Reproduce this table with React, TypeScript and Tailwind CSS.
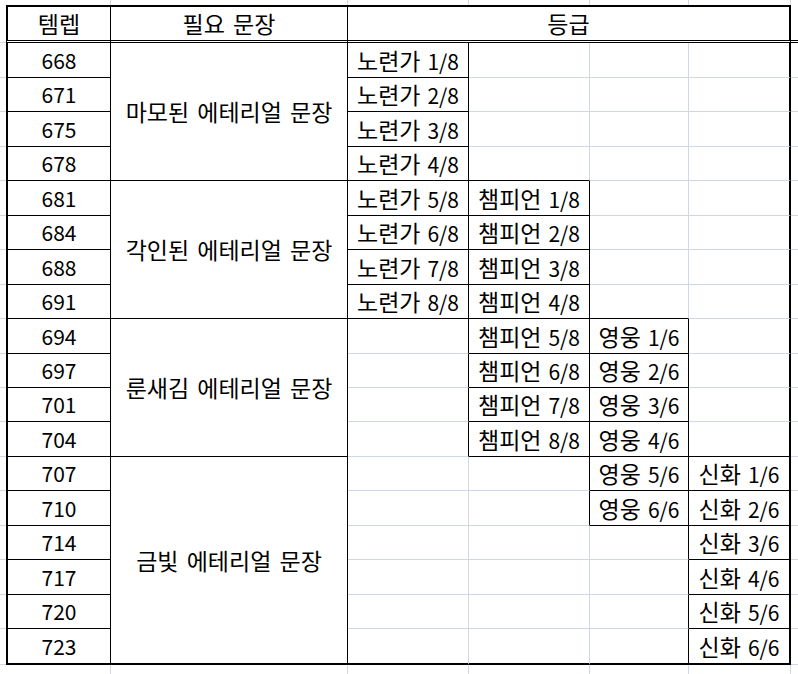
const TEMPLS = [668, 671, 675, 678, 681, 684, 688, 691, 694, 697, 701, 704, 707, 710, 714, 717, 720, 723]

const GROUPS = [
  { name: '마모된 에테리얼 문장', start: 0, span: 4 },
  { name: '각인된 에테리얼 문장', start: 4, span: 4 },
  { name: '룬새김 에테리얼 문장', start: 8, span: 4 },
  { name: '금빛 에테리얼 문장', start: 12, span: 6 },
]

// grade columns: 2..5 (C..F)
const GRADES = [
  { col: 2, first: 0, label: '노련가', total: 8 },
  { col: 3, first: 4, label: '챔피언', total: 8 },
  { col: 4, first: 8, label: '영웅', total: 6 },
  { col: 5, first: 12, label: '신화', total: 6 },
]

const LAST = TEMPLS.length - 1

const SPAN: Record<number, string> = { 4: 'row-span-4', 6: 'row-span-6' }

const RIGHT = {
  grid: 'border-r border-r-[#d0d7e5]',
  black: 'border-r border-r-black',
  thick: 'border-r-2 border-r-black',
}

const BOTTOM = {
  grid: 'border-b border-b-[#d0d7e5]',
  black: 'border-b border-b-black',
  thick: 'border-b-2 border-b-black',
}

function gradeOf(r: number, c: number) {
  const g = GRADES.find((x) => x.col === c)
  if (!g) return null
  const k = r - g.first
  if (k < 0 || k >= g.total) return null
  return { label: g.label, frac: `${k + 1}/${g.total}` }
}

function bordered(r: number, c: number) {
  if (r < 0 || r > LAST) return false
  if (c === 0 || c === 1) return true
  return gradeOf(r, c) !== null
}

const cell = 'flex items-center justify-center whitespace-nowrap'

// hangul is set a touch larger than digits, like Malgun Gothic in the sheet
function Ko({ children }: { children: string }) {
  return <span className="text-[23px] [word-spacing:3px]">{children}</span>
}

function MarginRow({ keyPrefix }: { keyPrefix: string }) {
  return (
    <>
      <div key={`${keyPrefix}-l`} />
      {[0, 1, 2, 3, 4, 5].map((c) => (
        <div key={`${keyPrefix}-${c}`} className={RIGHT.grid} />
      ))}
      <div key={`${keyPrefix}-r`} />
    </>
  )
}

export default function App() {
  return (
    <div className="h-[674px] w-[798px] overflow-hidden bg-white font-['Noto_Sans_CJK_KR','Noto_Sans',sans-serif] text-[21px] leading-none text-black">
      <div className="grid h-full grid-cols-[6px_105px_237px_121px_121px_99px_102px_7px] grid-rows-[5px_38px_35px_34px_35px_34px_35px_34px_35px_34px_35px_34px_34px_35px_34px_35px_34px_35px_34px_36px_9px]">
        <MarginRow keyPrefix="top" />

        {/* header */}
        <div className={BOTTOM.grid} />
        <div className={`${cell} border-double border-t-2 border-l-2 border-b-3 border-t-black border-l-black border-b-black ${RIGHT.black}`}>
          <Ko>템렙</Ko>
        </div>
        <div className={`${cell} border-double border-t-2 border-b-3 border-t-black border-b-black ${RIGHT.black}`}>
          <Ko>필요 문장</Ko>
        </div>
        <div className={`${cell} col-span-4 border-double border-t-2 border-b-3 border-t-black border-b-black ${RIGHT.thick}`}>
          <Ko>등급</Ko>
        </div>
        <div className="border-double border-b-3 border-b-black" />

        {TEMPLS.map((t, r) => {
          const group = GROUPS.find((g) => g.start === r)
          return (
            <div key={t} className="contents">
              <div className={BOTTOM.grid} />
              <div
                className={`${cell} border-l-2 border-l-black ${RIGHT.black} ${r === LAST ? BOTTOM.thick : BOTTOM.black}`}
              >
                {t}
              </div>
              {group && (
                <div
                  className={`${cell} ${SPAN[group.span]} ${RIGHT.black} ${
                    group.start + group.span - 1 === LAST ? BOTTOM.thick : BOTTOM.black
                  }`}
                >
                  <Ko>{group.name}</Ko>
                </div>
              )}
              {[2, 3, 4, 5].map((c) => {
                const grade = gradeOf(r, c)
                const right =
                  c === 5 ? RIGHT.thick : bordered(r, c) || bordered(r, c + 1) ? RIGHT.black : RIGHT.grid
                const bottom =
                  r === LAST ? BOTTOM.thick : bordered(r, c) || bordered(r + 1, c) ? BOTTOM.black : BOTTOM.grid
                return (
                  <div key={c} className={`${cell} ${right} ${bottom}`}>
                    {grade && (
                      <span>
                        <Ko>{grade.label}</Ko>
                        <span className="ml-[7px]">{grade.frac}</span>
                      </span>
                    )}
                  </div>
                )
              })}
              <div className={BOTTOM.grid} />
            </div>
          )
        })}

        <MarginRow keyPrefix="bottom" />
      </div>
    </div>
  )
}
